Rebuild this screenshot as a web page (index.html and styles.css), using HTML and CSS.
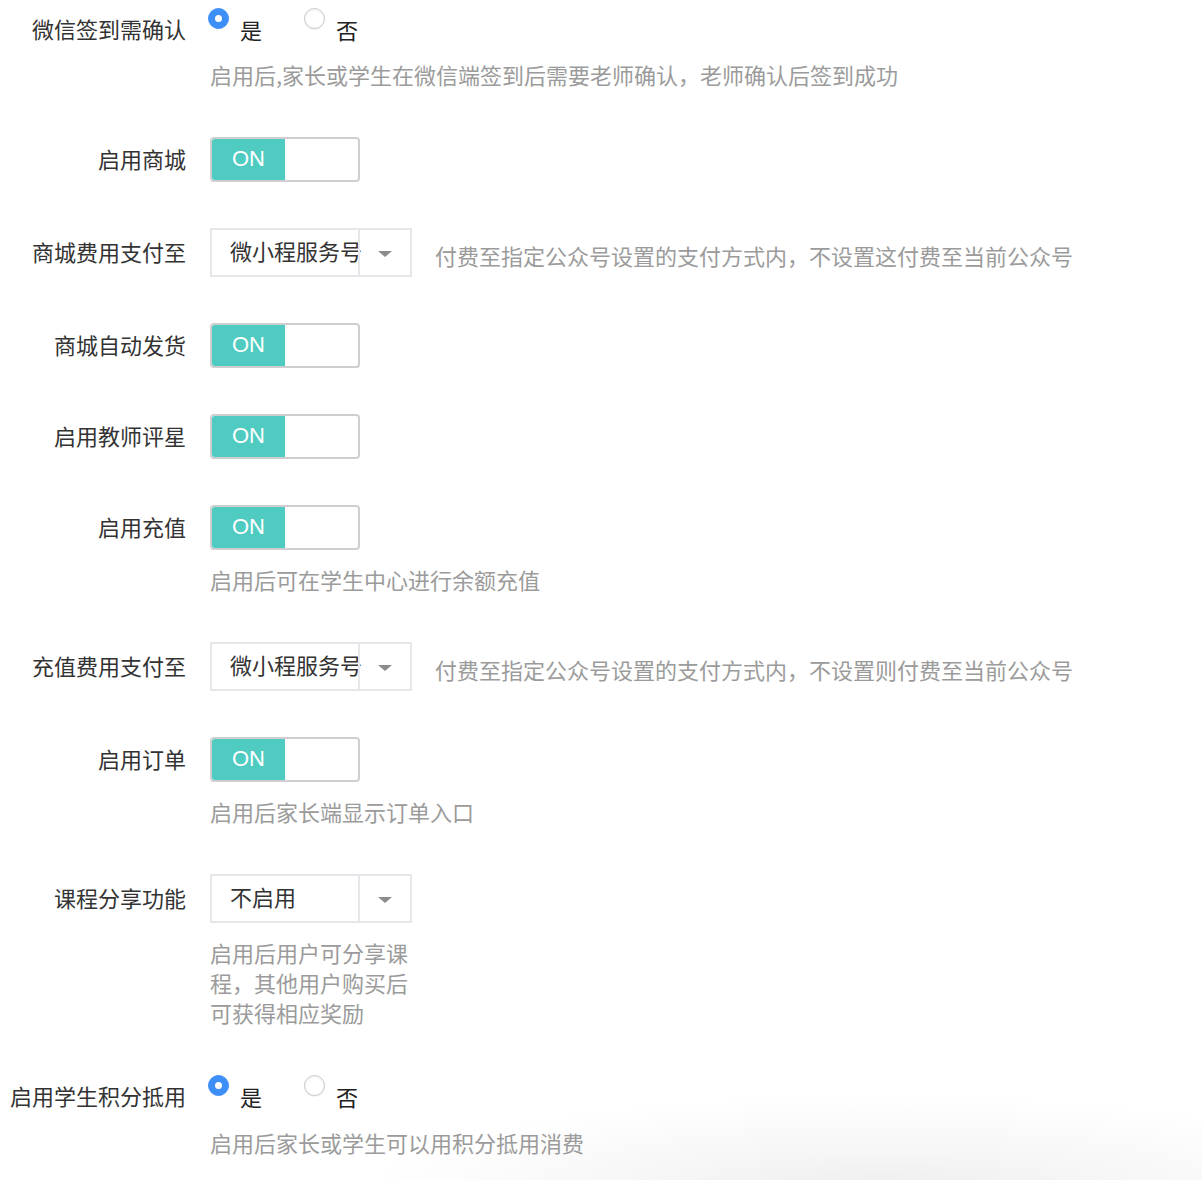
FILE: index.html
```html
<!DOCTYPE html>
<html lang="zh-CN">
<head>
<meta charset="utf-8">
<title>设置</title>
<link rel="stylesheet" href="styles.css">
</head>
<body>
<div class="form">
  <div class="field field-first">
    <div class="line line-radio">
      <label class="label">微信签到需确认</label>
      <div class="radios">
        <span class="radio-item"><span class="radio checked"></span><span class="radio-text">是</span></span>
        <span class="radio-item"><span class="radio"></span><span class="radio-text">否</span></span>
      </div>
    </div>
    <p class="hint hint-radio">启用后,家长或学生在微信端签到后需要老师确认，老师确认后签到成功</p>
  </div>

  <div class="field">
    <div class="line line-toggle">
      <label class="label">启用商城</label>
      <div class="toggle"><span class="toggle-on">ON</span><span class="toggle-off"></span></div>
    </div>
  </div>

  <div class="field">
    <div class="line line-select">
      <label class="label">商城费用支付至</label>
      <div class="select"><span class="select-value">微小程服务号</span><span class="select-arrow"><i class="caret"></i></span></div>
      <span class="side-hint">付费至指定公众号设置的支付方式内，不设置这付费至当前公众号</span>
    </div>
  </div>

  <div class="field">
    <div class="line line-toggle">
      <label class="label">商城自动发货</label>
      <div class="toggle"><span class="toggle-on">ON</span><span class="toggle-off"></span></div>
    </div>
  </div>

  <div class="field">
    <div class="line line-toggle">
      <label class="label">启用教师评星</label>
      <div class="toggle"><span class="toggle-on">ON</span><span class="toggle-off"></span></div>
    </div>
  </div>

  <div class="field">
    <div class="line line-toggle">
      <label class="label">启用充值</label>
      <div class="toggle"><span class="toggle-on">ON</span><span class="toggle-off"></span></div>
    </div>
    <p class="hint">启用后可在学生中心进行余额充值</p>
  </div>

  <div class="field">
    <div class="line line-select">
      <label class="label">充值费用支付至</label>
      <div class="select"><span class="select-value">微小程服务号</span><span class="select-arrow"><i class="caret"></i></span></div>
      <span class="side-hint">付费至指定公众号设置的支付方式内，不设置则付费至当前公众号</span>
    </div>
  </div>

  <div class="field">
    <div class="line line-toggle">
      <label class="label">启用订单</label>
      <div class="toggle"><span class="toggle-on">ON</span><span class="toggle-off"></span></div>
    </div>
    <p class="hint">启用后家长端显示订单入口</p>
  </div>

  <div class="field">
    <div class="line line-select">
      <label class="label">课程分享功能</label>
      <div class="select"><span class="select-value">不启用</span><span class="select-arrow"><i class="caret"></i></span></div>
    </div>
    <p class="hint hint-narrow">启用后用户可分享课程，其他用户购买后可获得相应奖励</p>
  </div>

  <div class="field">
    <div class="line line-radio">
      <label class="label">启用学生积分抵用</label>
      <div class="radios">
        <span class="radio-item"><span class="radio checked"></span><span class="radio-text">是</span></span>
        <span class="radio-item"><span class="radio"></span><span class="radio-text">否</span></span>
      </div>
    </div>
    <p class="hint hint-radio2">启用后家长或学生可以用积分抵用消费</p>
  </div>
</div>
</body>
</html>
```

FILE: styles.css
```css
html {
  background-color: #ffffff;
  background-image: radial-gradient(ellipse 520px 100px at 880px 1195px, #ededed 0%, rgba(240,240,240,0.6) 45%, rgba(255,255,255,0) 100%);
  background-repeat: no-repeat;
  min-height: 1180px;
}

body {
  margin: 0;
  font-family: "Noto Sans CJK SC", "Noto Sans", sans-serif;
  font-size: 22px;
  color: #333333;
}

.form {
  padding-top: 8px;
}

.field {
  margin-top: 46px;
}

.field-first {
  margin-top: 0;
}

.line {
  display: flex;
  align-items: center;
}

.line-radio { height: 44px; }
.line-toggle { height: 45px; }
.line-select { height: 49px; }

.label {
  width: 186px;
  margin-right: 24px;
  padding-bottom: 4px;
  text-align: right;
  color: #333333;
  white-space: nowrap;
  flex: none;
}

/* radios */
.radios {
  display: flex;
  align-self: stretch;
  margin-left: -2px;
}

.radio-item {
  display: flex;
  align-items: flex-start;
  margin-right: 42px;
}

.radio {
  width: 21px;
  height: 21px;
  box-sizing: border-box;
  border-radius: 50%;
  border: 1px solid #c9c9c9;
  background: #ffffff;
  box-shadow: inset 0 1px 2px rgba(0,0,0,0.08), 0 1px 1px rgba(0,0,0,0.06);
  position: relative;
  flex: none;
}

.radio.checked {
  background: #3e8ef7;
  border-color: #3e8ef7;
  box-shadow: none;
}

.radio.checked::after {
  content: "";
  position: absolute;
  left: 50%;
  top: 50%;
  width: 7px;
  height: 7px;
  margin: -3.5px 0 0 -3.5px;
  border-radius: 50%;
  background: #ffffff;
}

.radio-text {
  margin-left: 11px;
  line-height: 42px;
  color: #222222;
}

/* hints */
.hint {
  margin: 14px 0 0 210px;
  padding-bottom: 2px;
  line-height: 30px;
  color: #9b9b9b;
}

.hint-radio { margin-top: 7px; }
.hint-radio2 { margin-top: 8px; }

.hint-narrow {
  width: 202px;
}

.side-hint {
  margin-left: 23px;
  margin-top: 5px;
  color: #9b9b9b;
  white-space: nowrap;
}

/* toggle */
.toggle {
  width: 150px;
  height: 45px;
  box-sizing: border-box;
  border: 2px solid #cfcfcf;
  border-radius: 4px;
  display: flex;
  overflow: hidden;
  background: #ffffff;
}

.toggle-on {
  width: 73px;
  padding-bottom: 2px;
  box-sizing: border-box;
  background: #4fcbc1;
  color: #ffffff;
  font-family: "Liberation Sans", Arial, sans-serif;
  font-size: 22px;
  display: flex;
  align-items: center;
  justify-content: center;
  border-radius: 2px 0 0 2px;
}

.toggle-off {
  flex: 1;
}

/* select */
.select {
  width: 202px;
  height: 49px;
  box-sizing: border-box;
  border: 2px solid #e6e6eb;
  display: flex;
  background: #ffffff;
  flex: none;
}

.select-value {
  width: 146px;
  padding-left: 18px;
  padding-bottom: 6px;
  box-sizing: border-box;
  white-space: nowrap;
  display: flex;
  align-items: center;
  color: #333333;
  flex: none;
}

.select-arrow {
  flex: 1;
  border-left: 2px solid #e6e6eb;
  display: flex;
  align-items: center;
  justify-content: center;
}

.caret {
  display: block;
  width: 0;
  height: 0;
  border-left: 7px solid transparent;
  border-right: 7px solid transparent;
  border-top: 6px solid #8c8c8c;
  margin-top: 2px;
}
```
